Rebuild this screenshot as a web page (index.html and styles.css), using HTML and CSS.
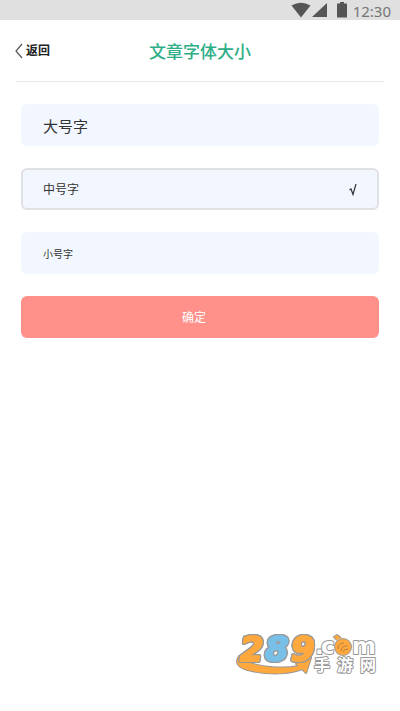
FILE: index.html
```html
<!DOCTYPE html>
<html lang="zh-CN">
<head>
<meta charset="utf-8">
<meta name="viewport" content="width=device-width, initial-scale=1">
<title>文章字体大小</title>
<link rel="stylesheet" href="styles.css">
</head>
<body>
<div class="status">
  <svg class="status-icons" width="58" height="18" viewBox="0 0 58 18" aria-hidden="true">
    <path d="M0.500 4.500Q10 -1 19.500 4.500L10 16.500Z"/>
    <path d="M36 2V16H21Z"/>
    <path d="M46 2.500H49V1H53V2.500H56V16.500H46Z"/>
  </svg>
  <time>12:30</time>
</div>
<header class="header">
  <a class="back" href="#">
    <svg width="8" height="16" viewBox="0 0 8 16" aria-hidden="true"><path d="M7 1L1 8L7 15"/></svg>
    <span>返回</span>
  </a>
  <h1>文章字体大小</h1>
</header>
<form class="sizes">
  <label class="option large"><input type="radio" name="size" value="large"><span>大号字</span></label>
  <label class="option medium"><input type="radio" name="size" value="medium" checked><span>中号字</span><svg class="tick" width="8" height="14" viewBox="0 0 8 14" aria-hidden="true"><path d="M0.500 8L2 7L4 12.500L7 2"/></svg></label>
  <label class="option small"><input type="radio" name="size" value="small"><span>小号字</span></label>
  <button class="confirm" type="button">确定</button>
</form>
<footer class="brand">
  <svg width="144" height="44" viewBox="0 0 144 44" role="img" aria-label="289.com 手游网">
    <path class="outline orange" d="M5 25C-1 33 7 38 18 40C37 44 56 43 68 38L72 42L77 27L62 33L65 35C49 38 28 37 10 30Z"/>
    <g class="digits">
      <text class="orange" x="6" y="30">2</text>
      <text class="blue" x="31" y="30">8</text>
      <text class="orange" x="57" y="30">9</text>
    </g>
    <g class="domain outline">
      <text x="81" y="23">.</text>
      <text x="87" y="23">c</text>
      <text x="118" y="23">m</text>
    </g>
    <circle class="outline orange" cx="109" cy="16" r="8"/>
    <path class="outline orange" d="M103 9L100 6L103 4L107 7"/>
    <path class="signal" d="M104 18Q104 12 110 12M107 20Q107 15 113 15M109 21Q110 18 114 18"/>
    <g class="site outline">
      <text x="80" y="40">手</text>
      <text x="103" y="40">游</text>
      <text x="126" y="40">网</text>
    </g>
  </svg>
</footer>
</body>
</html>
```
FILE: styles.css
```css
* { box-sizing: border-box; }
body {
  margin: 0;
  min-height: 100vh;
  display: flex;
  flex-direction: column;
  background: #fff;
  color: #333;
  font-family: "Noto Sans", "Noto Sans CJK SC", sans-serif;
}
.status {
  height: 20px;
  padding: 0 9px;
  display: flex;
  align-items: center;
  justify-content: flex-end;
  gap: 4px;
  background: #e0e0e0;
  color: #757575;
  font-size: 15px;
  line-height: 20px;
}
.status-icons { fill: #555; }
.status time { padding-top: 2px; }
.header {
  height: 62px;
  margin: 0 16px;
  display: grid;
  grid-template-columns: 1fr auto 1fr;
  align-items: center;
  border-bottom: 1px solid #e9e9e9;
}
.back {
  display: flex;
  align-items: center;
  gap: 3px;
  color: #222;
  font-size: 12px;
  font-weight: 700;
  line-height: 16px;
  text-decoration: none;
}
.back svg {
  margin-left: -1px;
  fill: none;
  stroke: #555;
  stroke-width: 1.2;
}
h1 {
  margin: 0;
  padding-top: 2px;
  color: #2dae87;
  font-size: 17px;
  font-weight: 500;
  line-height: 24px;
}
.sizes {
  padding: 22px 21px;
  display: flex;
  flex-direction: column;
  gap: 22px;
}
.option {
  height: 42px;
  padding: 0 20px;
  display: flex;
  align-items: center;
  justify-content: space-between;
  border: 2px solid #f1f6ff;
  border-radius: 6px;
  background: #f1f6ff;
}
.option input {
  position: absolute;
  appearance: none;
  margin: 0;
}
.option:has(input:checked) { border-color: #e0e1e5; }
.tick {
  fill: none;
  stroke: #333;
  stroke-width: 1.2;
}
.large { font-size: 15px; }
.medium { font-size: 12px; }
.small { font-size: 10px; }
.confirm {
  height: 42px;
  padding: 0 12px 0 0;
  border: 0;
  border-radius: 6px;
  background: #ff918a;
  color: #fff;
  font: inherit;
  font-size: 12px;
}
.brand {
  margin-top: auto;
  padding: 0 22px 36px;
  display: flex;
  justify-content: flex-end;
}
.brand svg { overflow: visible; }
.outline {
  stroke: #999;
  stroke-width: 2;
  stroke-linejoin: round;
  paint-order: stroke;
}
.orange { fill: #ffa83d; }
.blue { fill: #78c0e8; }
.digits {
  font: italic 700 34px "DejaVu Sans", sans-serif;
}
.digits text {
  stroke-width: 2;
  stroke-linejoin: round;
  filter: drop-shadow(1px 0 0 #999) drop-shadow(-1px 0 0 #999) drop-shadow(0 1px 0 #999) drop-shadow(0 -1px 0 #999);
}
.digits .orange { stroke: #ffa83d; }
.digits .blue { stroke: #78c0e8; }
.domain {
  fill: #fff;
  font: 700 23px "DejaVu Sans", sans-serif;
}
.site {
  fill: #fff;
  font: 700 16px "Noto Sans CJK SC", sans-serif;
}
.signal {
  fill: none;
  stroke: #b87d3c;
  stroke-width: 1;
}
```
